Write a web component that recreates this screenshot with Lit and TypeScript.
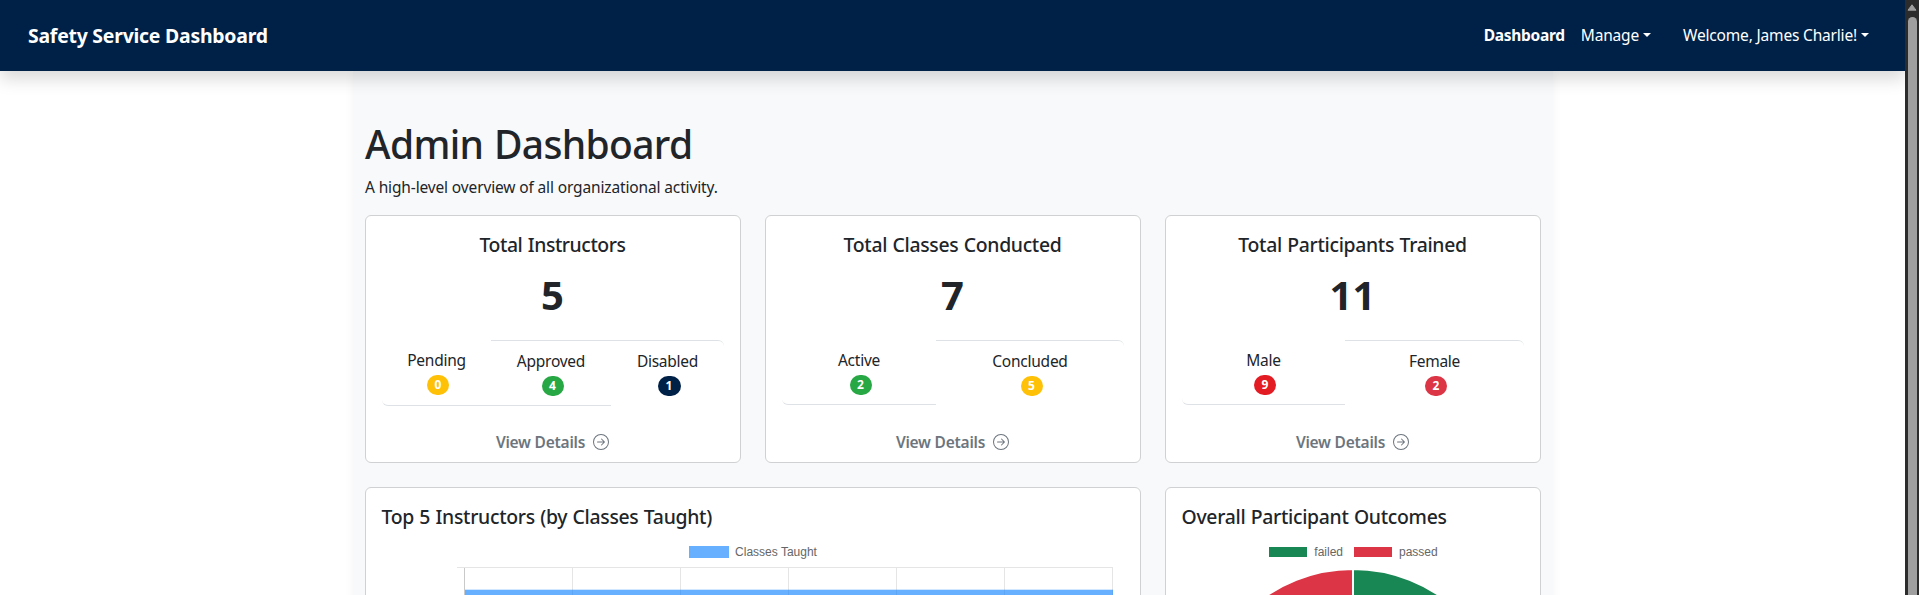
import { LitElement, html, svg, css } from "lit";
import { customElement, property } from "lit/decorators.js";
import { classMap } from "lit/directives/class-map.js";

interface Stat {
  label: string;
  value: number;
  tone: "warning" | "success" | "navy" | "red" | "danger";
}
interface Summary {
  kind: string;
  title: string;
  total: number;
  stats: Stat[];
}

const SUMMARIES: Summary[] = [
  {
    kind: "instructors",
    title: "Total Instructors",
    total: 5,
    stats: [
      { label: "Pending", value: 0, tone: "warning" },
      { label: "Approved", value: 4, tone: "success" },
      { label: "Disabled", value: 1, tone: "navy" },
    ],
  },
  {
    kind: "classes",
    title: "Total Classes Conducted",
    total: 7,
    stats: [
      { label: "Active", value: 2, tone: "success" },
      { label: "Concluded", value: 5, tone: "warning" },
    ],
  },
  {
    kind: "participants",
    title: "Total Participants Trained",
    total: 11,
    stats: [
      { label: "Male", value: 9, tone: "red" },
      { label: "Female", value: 2, tone: "danger" },
    ],
  },
];

@customElement("nav-bar")
export class NavBar extends LitElement {
  static styles = css`
    :host {
      display: flex;
      align-items: center;
      box-sizing: border-box;
      height: 71px;
      padding: 0 36px 0 28px;
      background: #002147;
      color: #fff;
      box-shadow: 0 8px 16px rgba(0, 0, 0, 0.15);
      position: relative;
      z-index: 1;
      white-space: nowrap;
    }
    .brand {
      font-size: 19.4px;
      font-weight: 700;
      letter-spacing: -0.22px;
      margin-right: auto;
    }
    .links {
      display: flex;
      align-items: center;
      padding-bottom: 1px;
      font-size: 15.5px;
      letter-spacing: -0.18px;
    }
    .link {
      display: flex;
      align-items: center;
    }
    .active {
      font-weight: 700;
      letter-spacing: -0.3px;
      margin-right: 16px;
    }
    .manage {
      margin-right: 32px;
    }
    .caret {
      margin-left: 4px;
      border-top: 4.8px solid;
      border-left: 4.2px solid transparent;
      border-right: 4.2px solid transparent;
    }
  `;
  render() {
    return html`
      <div class="brand">Safety Service Dashboard</div>
      <div class="links">
        <span class="link active">Dashboard</span>
        <span class="link manage">Manage<i class="caret"></i></span>
        <span class="link">Welcome, James Charlie!<i class="caret"></i></span>
      </div>
    `;
  }
}

@customElement("summary-card")
export class SummaryCard extends LitElement {
  @property({ attribute: false }) data!: Summary;

  static styles = css`
    :host {
      display: flex;
      flex-direction: column;
      align-items: center;
      box-sizing: border-box;
      height: 248px;
      padding: 17px 16px 8px;
      border: 1px solid #d0d1d2;
      border-radius: 6px;
      background: #fff;
    }
    .title {
      margin: 0 1px 8px 0;
      font-size: 19.4px;
      font-weight: 530;
      line-height: 24px;
      letter-spacing: -0.33px;
      word-spacing: 0.8px;
    }
    .title.instructors {
      letter-spacing: -0.45px;
    }
    .total {
      margin: 0 1px 15px 0;
      font-size: 40px;
      font-weight: 700;
      line-height: 60px;
    }
    .stats {
      display: grid;
      align-self: stretch;
      height: 65px;
    }
    .stats.instructors {
      grid-template-columns: 109px 120px 113px;
      height: 66px;
    }
    .stats.classes {
      grid-template-columns: 154px 188px;
    }
    .stats.participants {
      grid-template-columns: 163px 179px;
    }
    .stat {
      display: flex;
      flex-direction: column;
      align-items: center;
      padding-top: 8px;
      border: 0 solid #dee2e6;
      border-top-width: 1px;
      border-bottom-width: 1px;
    }
    .stat:first-child {
      border-top-width: 0;
      border-bottom-left-radius: 6px;
    }
    .stat:last-child {
      border-bottom-width: 0;
      border-top-right-radius: 6px;
    }
    .label {
      font-size: 15.5px;
      line-height: 24px;
      letter-spacing: -0.25px;
    }
    .badge {
      box-sizing: border-box;
      min-width: 22px;
      height: 20px;
      margin: 3px 0 0 3px;
      border-radius: 10px;
      color: #fff;
      font-size: 12px;
      font-weight: 700;
      line-height: 20px;
      text-align: center;
    }
    .warning {
      background: #ffc107;
    }
    .success {
      background: #28a745;
    }
    .navy {
      background: #002147;
      min-width: 23px;
    }
    .red {
      background: #e31b23;
    }
    .danger {
      background: #dc3545;
    }
    .details {
      display: flex;
      align-items: center;
      gap: 8px;
      margin: auto 1px 0 0;
      color: #6c757d;
      font-size: 15.5px;
      font-weight: 560;
      letter-spacing: -0.23px;
      line-height: 24px;
    }
    .details svg {
      display: block;
    }
  `;

  render() {
    const { kind, title, total, stats } = this.data;
    return html`
      <div class=${classMap({ title: true, [kind]: true })}>${title}</div>
      <div class="total">${total}</div>
      <div class=${classMap({ stats: true, [kind]: true })}>
        ${stats.map(
          (s) => html`<div class="stat">
            <span class="label">${s.label}</span>
            <span class=${classMap({ badge: true, [s.tone]: true })}>${s.value}</span>
          </div>`
        )}
      </div>
      <div class="details">
        <span>View Details</span>
        <svg width="16" height="16" viewBox="0 0 16 16" fill="currentColor">
          <path
            fill-rule="evenodd"
            d="M1 8a7 7 0 1 0 14 0A7 7 0 0 0 1 8m15 0A8 8 0 1 1 0 8a8 8 0 0 1 16 0M4.5 7.5a.5.5 0 0 0 0 1h5.793l-2.147 2.146a.5.5 0 0 0 .708.708l3-3a.5.5 0 0 0 0-.708l-3-3a.5.5 0 1 0-.708.708L10.293 7.5z"
          />
        </svg>
      </div>
    `;
  }
}

@customElement("chart-card")
export class ChartCard extends LitElement {
  @property() heading = "";
  @property() type: "bar" | "pie" = "bar";

  static styles = css`
    :host {
      display: block;
      box-sizing: border-box;
      height: 420px;
      padding: 17px 16px 16px;
      border: 1px solid #d0d1d2;
      border-radius: 6px;
      background: #fff;
    }
    .title {
      margin-left: -0.5px;
      font-size: 19.4px;
      font-weight: 530;
      line-height: 24px;
      letter-spacing: -0.3px;
      word-spacing: 0.6px;
    }
    .legend {
      display: flex;
      justify-content: center;
      align-items: center;
      height: 12px;
      margin-top: 17px;
      font: 12px/12px "Liberation Sans", Arial, sans-serif;
      color: #666;
    }
    .swatch {
      width: 40px;
      height: 12px;
      margin-right: 6px;
      background: #66b0ff;
    }
    .swatch.failed,
    .swatch.passed {
      width: 38px;
      height: 10px;
      margin-right: 7px;
      background: #198754;
    }
    .swatch.passed {
      margin-left: 11px;
      background: #dc3545;
    }
    .pie-legend {
      padding-left: 1px;
    }
    .plot {
      display: block;
      margin-top: 8px;
    }
  `;

  private bar() {
    const lines = [1, 2, 3, 4, 5, 6].map((i) => 82.5 + i * 108);
    return html`
      <div class="legend"><i class="swatch"></i>Classes Taught</div>
      <svg class="plot" width="742" height="320" viewBox="0 0 742 320">
        <path d="M75 1.5H731" stroke="#e5e5e5" fill="none" />
        ${lines.map((x) => svg`<path d=${`M${x} 1V320`} stroke="#e5e5e5" />`)}
        <path d="M82.5 2V320" stroke="#c9c9c9" />
        <rect x="83" y="23.7" width="648" height="50" fill="#007bff" fill-opacity=".6" />
      </svg>
    `;
  }

  private pie() {
    return html`
      <div class="legend pie-legend">
        <i class="swatch failed"></i>failed<i class="swatch passed"></i>passed
      </div>
      <svg class="plot" width="342" height="320" viewBox="0 0 342 320">
        <path d="M171 3A154 154 0 0 1 171 311Z" fill="#198754" stroke="#fff" stroke-width="2" />
        <path d="M171 311A154 154 0 0 1 171 3Z" fill="#dc3545" stroke="#fff" stroke-width="2" />
        <path d="M171 2V312" stroke="#fff" stroke-width="2" />
      </svg>
    `;
  }

  render() {
    return html`
      <div class="title">${this.heading}</div>
      ${this.type === "bar" ? this.bar() : this.pie()}
    `;
  }
}

@customElement("app-root")
export class AppRoot extends LitElement {
  static styles = css`
    :host {
      display: grid;
      grid-template-columns: 1fr 14px;
      height: 595px;
      overflow: hidden;
      background: #fff;
      color: #212529;
      font-family: "Noto Sans", "Open Sans", sans-serif;
    }
    .page {
      height: 595px;
      overflow: hidden;
    }
    .container {
      box-sizing: border-box;
      width: 1200px;
      margin-left: 353px;
      padding: 48px 12px 24px;
      background: #f8f9fb;
      box-shadow: 0 0 10px rgba(0, 0, 0, 0.045);
    }
    .heading {
      box-sizing: border-box;
      height: 48px;
      margin: 0 0 8px;
      padding-top: 1px;
      font-size: 39px;
      font-weight: 520;
      line-height: 48px;
      letter-spacing: -0.65px;
      word-spacing: 1px;
    }
    .lead {
      margin: 0 0 16px;
      font-size: 15.5px;
      line-height: 24px;
      letter-spacing: -0.14px;
    }
    .grid {
      display: grid;
      grid-template-columns: repeat(3, 376px);
      gap: 24px;
    }
    .wide {
      grid-column: span 2;
    }
    .scrollbar {
      display: flex;
      flex-direction: column;
      align-items: center;
      background: #2c2c2c;
    }
    .up {
      display: block;
      margin: 4px 0 6px;
    }
    .thumb {
      width: 9px;
      flex: 1;
      border-radius: 4.5px 4.5px 0 0;
      background: #9f9f9f;
    }
  `;

  render() {
    return html`
      <div class="page">
        <nav-bar></nav-bar>
        <main class="container">
          <h1 class="heading">Admin Dashboard</h1>
          <p class="lead">A high-level overview of all organizational activity.</p>
          <div class="grid">
            ${SUMMARIES.map((s) => html`<summary-card .data=${s}></summary-card>`)}
            <chart-card class="wide" type="bar" heading="Top 5 Instructors (by Classes Taught)"></chart-card>
            <chart-card type="pie" heading="Overall Participant Outcomes"></chart-card>
          </div>
        </main>
      </div>
      <div class="scrollbar">
        <svg class="up" width="10" height="7" viewBox="0 0 10 7">
          <path d="M5 .8L9 6.2H1Z" fill="#9f9f9f" stroke="#9f9f9f" stroke-linejoin="round" />
        </svg>
        <div class="thumb"></div>
      </div>
    `;
  }
}
